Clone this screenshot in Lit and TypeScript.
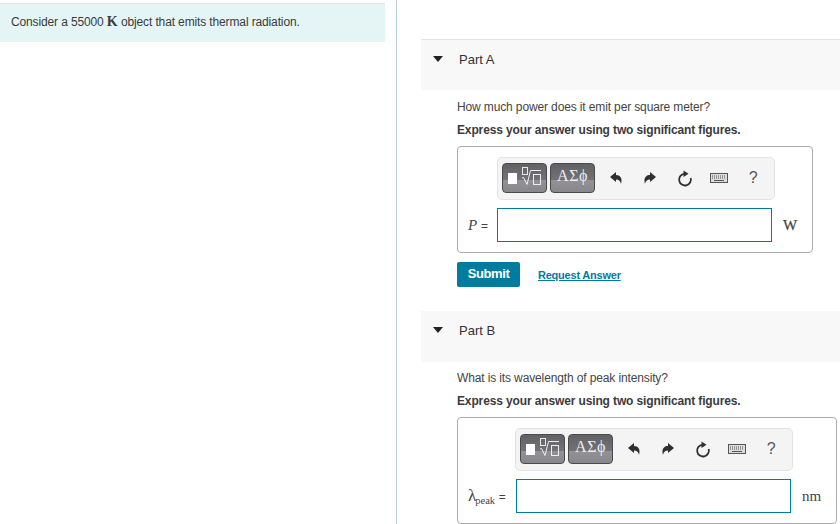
import { LitElement, html, css, svg } from "lit";
import { customElement } from "lit/decorators.js";

const undo = svg`<path d="M0 5 L6 0 V3 C10 3 12.8 6 11 12 C10.5 9 9 7.4 6 7.4 V10 Z" fill="#2f2f2f"/>`;
const redo = svg`<path d="M12 5 L6 0 V3 C2 3 -0.8 6 1 12 C1.5 9 3 7.4 6 7.4 V10 Z" fill="#2f2f2f"/>`;

@customElement("app-root")
export class AppRoot extends LitElement {
  static styles = css`
    :host { display: flex; width: 840px; height: 524px; overflow: hidden; background: #fff;
      font-family: "Liberation Sans", Arial, sans-serif; font-size: 12px; letter-spacing: -.13px; color: #3b3b3b; }
    .left { width: 397px; flex: none; box-sizing: border-box; border-right: 1px solid #b9ccdc; padding-top: 3px; }
    .intro { width: 385px; height: 39px; box-sizing: border-box; background: #e5f5f6; border-top: 1px solid #dde6e8;
      padding: 11px 0 0 11px; line-height: 14px; }
    .K { font-family: "Liberation Serif", serif; font-weight: bold; font-size: 14px; letter-spacing: 0; }
    .right { flex: 1; min-width: 0; padding: 39px 0 0 24px; }
    .head { height: 51px; box-sizing: border-box; background: #f8f8f8; display: flex; gap: 16px; padding: 12px 0 0 12px; font-size: 13px; letter-spacing: 0; line-height: 16px; color: #333; }
    .head.a { border-top: 1px solid #e2e2e2; }
    .head svg { margin-top: 4px; flex: none; }
    .body { padding-left: 36px; }
    .q { line-height: 14px; margin-top: 9px; color: #444; }
    .part-a .q { margin-top: 10px; }
    .x { line-height: 14px; margin-top: 9px; font-weight: bold; color: #3b3b3b; }
    .box { box-sizing: border-box; margin-top: 9px; height: 107px; border: 1px solid #ababab; border-radius: 4px; padding-top: 10px; }
    .a-box { width: 356px; padding-left: 39px; }
    .b-box { width: 380px; padding-left: 57px; }
    .tools { width: 278px; height: 43px; box-sizing: border-box; border: 1px solid #e2e2e2; border-radius: 5px; background: #f4f4f4; display: flex; align-items: center; padding: 0 0 1px 4px; }
    .btn { width: 45px; height: 30px; box-sizing: border-box; border: 1px solid #4a4a4a; border-radius: 4px; margin-right: 3px;
      background: linear-gradient(#626266, #737377 58%, #929296 58%, #88888c 100%); display: block; flex: none; }
    .greek { width: 45px; color: #eee; font-family: "Liberation Serif", serif; font-size: 16px; line-height: 24px; text-align: center; letter-spacing: .5px; }
    .ic { flex: none; width: 34.25px; display: flex; justify-content: center; }
    .first { margin-left: 1px; }
    .help { font-size: 16px; letter-spacing: 0; color: #555; line-height: 16px; }
    .row { display: flex; align-items: center; height: 34px; margin-top: 8px; margin-left: -39px; }
    .b-box .row { margin-left: -57px; }
    .lbl { width: 39px; box-sizing: border-box; padding-left: 10px; font-family: "Liberation Serif", serif; font-size: 15px; letter-spacing: 0; color: #444; white-space: nowrap; }
    .b-box .lbl { width: 58px; }
    .lbl .eq { font-family: "Liberation Sans", sans-serif; font-size: 12px; }
    .lam { font-size: 17px; }
    .lbl sub { font-size: 10.5px; line-height: 0; vertical-align: -3px; margin-left: -1px; }
    .in { box-sizing: border-box; height: 34px; width: 275px; border: 1px solid #007c9e; background: #fff; flex: none; }
    .unit { font-family: "Liberation Serif", serif; font-size: 15px; letter-spacing: 0; color: #444; margin-left: 11px; }
    .unit.w { -webkit-text-stroke: .25px #444; }
    .actions { display: flex; align-items: center; gap: 18px; margin-top: 9px; height: 25px; margin-bottom: 24px; }
    .sub { width: 63px; height: 25px; background: #007c9e; border-radius: 2px; color: #fff; font-size: 13px;
      display: flex; align-items: center; justify-content: center; letter-spacing: -.4px; box-sizing: border-box; padding-bottom: 2px; font-weight: bold; }
    .req { color: #007c9e; font-size: 11px; font-weight: bold; text-decoration: underline; letter-spacing: -.22px; }
  `;

  tri() {
    return html`<svg width="10" height="6" viewBox="0 0 10 6"><path d="M0 0H10L5 6Z" fill="#222"/></svg>`;
  }

  tools() {
    return html`<div class="tools">
      <div class="btn">
        <svg width="43" height="28" viewBox="0 0 43 28" fill="none">
          <rect x="5" y="9" width="9" height="11" fill="#fff"/>
          <rect x="19.5" y="3.5" width="5" height="7" stroke="#e8e8e8"/>
          <path d="M19 14 L20.5 13.5 L24 20.5 L27.5 6.5 H38" stroke="#eee"/>
          <rect x="30.5" y="10.5" width="7" height="10" stroke="#eee"/>
        </svg>
      </div>
      <div class="btn greek">ΑΣϕ</div>
      <div class="ic first"><svg width="13" height="12" viewBox="0 0 13 12">${undo}</svg></div>
      <div class="ic"><svg width="13" height="12" viewBox="0 0 13 12">${redo}</svg></div>
      <div class="ic"><svg width="16" height="17" viewBox="0 0 16 17" fill="none"><path d="M13.7 8 A5.9 5.9 0 1 1 7 3.8" stroke="#2f2f2f" stroke-width="1.8"/><path d="M6.5 0.5 L11.5 3.8 L6.5 7 Z" fill="#2f2f2f"/></svg></div>
      <div class="ic"><svg width="18" height="10" viewBox="0 0 18 10" fill="none"><rect x=".5" y=".5" width="17" height="9" fill="#ddd" stroke="#555"/><path d="M2 3H16M2 5H16" stroke="#555" stroke-dasharray="1 1"/><path d="M4 7.5H14" stroke="#555"/></svg></div>
      <div class="ic help">?</div>
    </div>`;
  }

  render() {
    return html`
      <div class="left">
        <div class="intro">Consider a 55000 <span class="K">K</span> object that emits thermal radiation.</div>
      </div>
      <div class="right">
        <div class="part-a">
          <div class="head a">${this.tri()}<span>Part A</span></div>
          <div class="body">
            <div class="q">How much power does it emit per square meter?</div>
            <div class="x">Express your answer using two significant figures.</div>
            <div class="box a-box">
              ${this.tools()}
              <div class="row">
                <div class="lbl"><i>P</i> <span class="eq">=</span></div>
                <div class="in"></div>
                <div class="unit w">W</div>
              </div>
            </div>
            <div class="actions"><div class="sub">Submit</div><div class="req">Request Answer</div></div>
          </div>
        </div>
        <div class="part-b">
          <div class="head">${this.tri()}<span>Part B</span></div>
          <div class="body">
            <div class="q">What is its wavelength of peak intensity?</div>
            <div class="x">Express your answer using two significant figures.</div>
            <div class="box b-box">
              ${this.tools()}
              <div class="row">
                <div class="lbl"><span class="lam">λ</span><sub>peak</sub> <span class="eq">=</span></div>
                <div class="in"></div>
                <div class="unit">nm</div>
              </div>
            </div>
          </div>
        </div>
      </div>
    `;
  }
}
